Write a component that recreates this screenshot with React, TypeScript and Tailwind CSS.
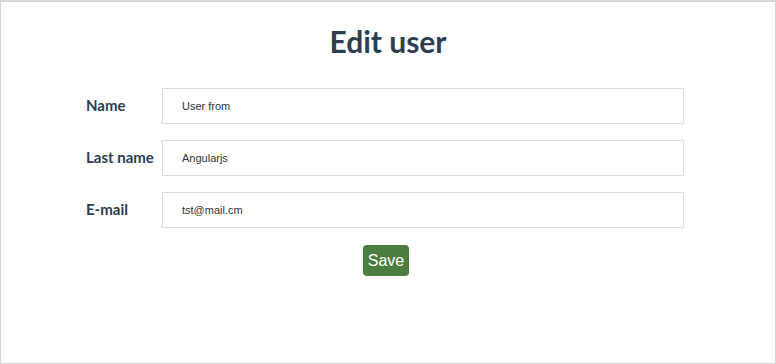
import { useState } from "react";

const fields = [
  { label: "Name", value: "User from" },
  { label: "Last name", value: "Angularjs" },
  { label: "E-mail", value: "tst@mail.cm" },
];

export default function App() {
  const [values, setValues] = useState(fields.map((f) => f.value));

  return (
    <div className="w-[776px] h-[364px] bg-white border border-[#d6d6d6] border-t-2 font-['Lato',sans-serif] text-[#2c3e50]">
      <h1 className="text-center text-[30px] font-bold leading-none pt-[24px]">Edit user</h1>

      <form className="pl-[84px] pt-[32px] flex flex-col gap-4">
        {fields.map((f, i) => (
          <div key={f.label} className="flex items-start">
            <label className="w-[77px] pt-[10px] pl-[1px] text-[15px] font-bold leading-none">{f.label}</label>
            <input
              value={values[i]}
              onChange={(e) => {
                const next = [...values];
                next[i] = e.target.value;
                setValues(next);
              }}
              className="w-[522px] h-[36px] border border-[#dcdcdc] pl-[19px] text-[11px] text-[#333] font-['Liberation_Sans',sans-serif] outline-none"
            />
          </div>
        ))}

        <div className="flex pl-[278px] pt-[1px]">
          <button
            type="button"
            className="w-[46px] h-[31px] rounded bg-[#4a7d3f] text-white text-[16px] font-['Liberation_Sans',sans-serif]"
          >
            Save
          </button>
        </div>
      </form>
    </div>
  );
}
